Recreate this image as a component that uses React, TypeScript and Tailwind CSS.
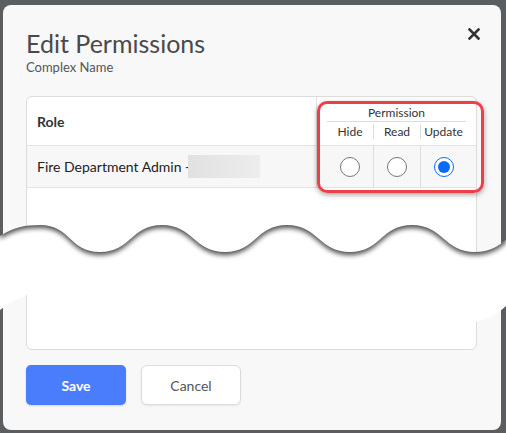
import React from "react";

const TOP =
  "M 0 236 C 12 228, 24 225, 40 225 C 71 225, 69 252, 100 252 C 131 252, 131 225, 162 225 C 193 225, 194 252, 225 252 C 256 252, 256 225, 287 225 C 318 225, 319 252, 350 252 C 381 252, 381 225, 412 225 C 443 225, 444 252, 475 252 C 490 252, 498 246, 506 240";
const BAND =
  TOP +
  " L 506 306 C 495 316, 485 322, 465 323 C 350 325, 150 280, 60 288 C 35 290, 15 298, 0 310 Z";
const ABOVE = TOP + " L 506 150 L 0 150 Z";

function Radio({ checked }: { checked?: boolean }) {
  if (checked) {
    return (
      <div className="w-[20px] h-[20px] rounded-full border-[1.5px] border-[#0a6cf5] bg-white flex items-center justify-center">
        <div className="w-[12px] h-[12px] rounded-full bg-[#0a6cf5]" />
      </div>
    );
  }
  return <div className="w-[20px] h-[20px] rounded-full border border-[#767676] bg-white" />;
}

export default function App() {
  return (
    <div
      className="relative w-[506px] h-[433px] overflow-hidden bg-[#5b5e60] pt-[5px] pl-[3px]"
      style={{ fontFamily: "Lato, 'Noto Sans', sans-serif" }}
    >
      <div className="relative w-[498px] h-[425px] rounded-[8px] bg-[#f8f8f8] px-[23px] pt-[23px]">
        <button className="absolute left-[465px] top-[23px] w-[12px] h-[12px]">
          <svg width="12" height="12" viewBox="0 0 12 12">
            <path d="M1.5 1.5 L10.5 10.5 M10.5 1.5 L1.5 10.5" stroke="#333" strokeWidth="2.6" strokeLinecap="square" />
          </svg>
        </button>
        <div className="text-[25px] leading-[30px] text-[#4a4a4a]">Edit Permissions</div>
        <div className="mt-[2px] text-[13px] leading-[15px] text-[#555]">Complex Name</div>

        <div className="mt-[21px] w-[451px] h-[254px] bg-white border border-[#dcdcdc] rounded-[6px] overflow-hidden">
          <div className="flex h-[49px] border-b border-[#e3e3e3]">
            <div className="w-[289px] flex items-center pl-[10px] text-[14px] font-bold text-[#333]">Role</div>
            <div className="w-[160px] border-l border-[#e3e3e3] px-[10px] pt-[7px] text-[12px] text-[#333]">
              <div className="text-center leading-[17px]">Permission</div>
              <div className="flex border-t border-[#dddddd]">
                <div className="w-[46px] mt-[2px] h-[15px] flex items-center justify-center">Hide</div>
                <div className="w-[47px] mt-[2px] h-[15px] flex items-center justify-center border-l border-[#dddddd]">Read</div>
                <div className="w-[46px] mt-[2px] h-[15px] flex items-center justify-center border-l border-[#dddddd]">Update</div>
              </div>
            </div>
          </div>
          <div className="flex h-[42px] bg-[#f7f7f7] border-b border-[#e3e3e3]">
            <div className="w-[289px] flex items-center pl-[10px] text-[14px] text-[#222]">
              <span>Fire Department Admin -</span>
              <span className="-ml-[2px] inline-block w-[72px] h-[23px] bg-gradient-to-r from-[#e1e1e1] to-[#ededed]" />
            </div>
            <div className="w-[160px] border-l border-[#e3e3e3] px-[10px] flex">
              <div className="w-[46px] flex items-center justify-center">
                <Radio />
              </div>
              <div className="w-[47px] flex items-center justify-center border-l border-[#dddddd]">
                <Radio />
              </div>
              <div className="w-[46px] flex items-center justify-center border-l border-[#dddddd]">
                <Radio checked />
              </div>
            </div>
          </div>
        </div>

        <div className="mt-[15px] flex gap-[15px]">
          <button className="w-[100px] h-[40px] rounded-[5px] bg-[#4a7dfc] text-white text-[14px] font-bold shadow-[0_1px_2px_rgba(0,0,0,0.15)]">
            Save
          </button>
          <button className="w-[100px] h-[40px] rounded-[6px] bg-white border border-[#dcdcdc] text-[#555] text-[14px] shadow-[0_1px_2px_rgba(0,0,0,0.08)]">
            Cancel
          </button>
        </div>

        <div className="absolute left-[314px] top-[96px] w-[167px] h-[92px] rounded-[10px] border-[3px] border-[#ef3e48] shadow-[0_2px_5px_rgba(0,0,0,0.35)]" />
      </div>

      <svg className="absolute left-0 top-0 pointer-events-none" width="506" height="433" viewBox="0 0 506 433">
        <defs>
          <clipPath id="band">
            <path d={BAND} />
          </clipPath>
          <filter id="blur" x="-10%" y="-50%" width="120%" height="200%">
            <feGaussianBlur stdDeviation="2.5" />
          </filter>
        </defs>
        <path d={BAND} fill="#ffffff" />
        <g clipPath="url(#band)">
          <path d={ABOVE} fill="#000" opacity="0.7" filter="url(#blur)" transform="translate(0,3)" />
        </g>
      </svg>
    </div>
  );
}
